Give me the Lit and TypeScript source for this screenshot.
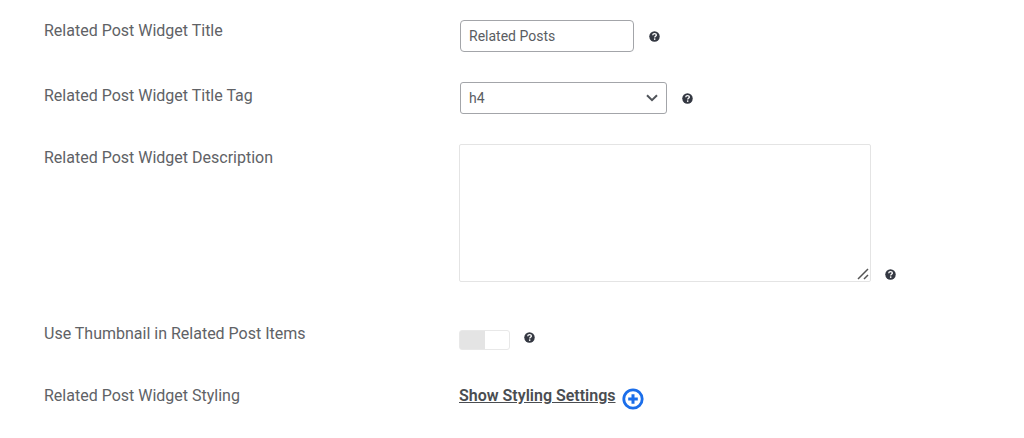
import { LitElement, html, css } from "lit";
import { customElement, property, state } from "lit/decorators.js";

@customElement("help-tip")
class HelpTip extends LitElement {
  @property() label = "Help";

  static styles = css`
    :host {
      display: block;
      flex: none;
      margin: 2px 0;
    }
    .tip {
      display: block;
      width: 11px;
      height: 11px;
      padding: 0;
      border: 0;
      background: none;
      cursor: help;
    }
    svg {
      display: block;
    }
  `;

  render() {
    return html`<button class="tip" type="button" aria-label=${this.label}>
      <svg viewBox="0 0 22 22" width="11" height="11" aria-hidden="true">
        <circle cx="11" cy="11" r="10.5" fill="#343842" />
        <path d="M7.4 8.4C7.6 6.4 9 5.3 11 5.3c2.200 0 3.700 1.100 3.700 2.900 0 2.400-3.200 2.500-3.200 4.700" fill="none" stroke="#fff" stroke-width="2.700" />
        <circle cx="11.400" cy="16.200" r="1.700" fill="#fff" />
      </svg>
    </button>`;
  }
}

@customElement("app-root")
class AppRoot extends LitElement {
  @state() private thumbnails = false;

  static styles = css`
    :host {
      display: block;
      background: #fff;
      color: #606266;
      font-family: Roboto, sans-serif;
      font-size: 16px;
      line-height: 22px;
    }
    * {
      box-sizing: border-box;
    }
    .settings {
      padding: 20px 44px 0;
    }
    .row {
      display: grid;
      grid-template-columns: minmax(0, 415px) minmax(0, 1fr);
      align-items: start;
      min-height: 62px;
    }
    .label {
      padding-top: 3px;
    }
    .first .label {
      padding-top: 0;
    }
    .field {
      display: flex;
      align-items: center;
      gap: 14px;
    }
    .area {
      align-items: flex-end;
      padding-bottom: 38px;
    }
    .toggle {
      align-items: flex-start;
      padding-top: 10px;
    }
    .link {
      padding-top: 3px;
    }
    .text,
    .select {
      height: 32px;
      margin: 0 1px;
      padding: 0 8px;
      border: 1px solid #a3a5a9;
      border-radius: 4px;
      background: #fff;
      color: #5a5d62;
      font: 14px/20px Roboto, sans-serif;
    }
    .text {
      width: 174px;
    }
    .pick {
      display: grid;
      align-items: center;
    }
    .select {
      grid-area: 1 / 1;
      width: 207px;
      border-radius: 3px;
      appearance: none;
    }
    .chevron {
      grid-area: 1 / 1;
      justify-self: end;
      margin-right: 10px;
      pointer-events: none;
    }
    .textarea {
      display: block;
      width: 412px;
      max-width: 100%;
      height: 138px;
      margin: 0;
      padding: 8px;
      border: 1px solid #e4e4e4;
      border-radius: 2px;
      background: #fff;
      color: inherit;
      font: inherit;
      resize: both;
    }
    .textarea::-webkit-resizer {
      background: no-repeat center / 13px 13px
        url("data:image/svg+xml,%3Csvg xmlns='http://www.w3.org/2000/svg' viewBox='0 0 13 13'%3E%3Cpath d='M2 12L12 2M8 12l4-4' stroke='%23555' stroke-width='1.5'/%3E%3C/svg%3E");
    }
    .switch {
      appearance: none;
      width: 51px;
      height: 20px;
      margin: 0;
      border: 1px solid #e8e8e8;
      border-radius: 3px;
      background: linear-gradient(90deg, #e4e4e4 52%, #fff 52%);
    }
    .switch:checked {
      background: linear-gradient(90deg, #fff 48%, #1d6fe0 48%);
    }
    .show {
      display: flex;
      align-items: flex-start;
      gap: 6px;
      color: #4a4d51;
      font-weight: 600;
      text-decoration: none;
    }
    .words {
      text-decoration: underline;
    }
    .plus {
      display: block;
      margin-top: 3px;
    }
  `;

  render() {
    return html`<form class="settings">
      <div class="row first">
        <label class="label" for="title">Related Post Widget Title</label>
        <div class="field">
          <input class="text" id="title" type="text" value="Related Posts" />
          <help-tip></help-tip>
        </div>
      </div>
      <div class="row">
        <label class="label" for="tag">Related Post Widget Title Tag</label>
        <div class="field">
          <div class="pick">
            <select class="select" id="tag">
              <option>h4</option>
            </select>
            <svg class="chevron" viewBox="0 0 12 8" width="12" height="8" aria-hidden="true">
              <path d="M1 1.200l5 5 5-5" fill="none" stroke="#50545a" stroke-width="2" />
            </svg>
          </div>
          <help-tip></help-tip>
        </div>
      </div>
      <div class="row">
        <label class="label" for="description">Related Post Widget Description</label>
        <div class="field area">
          <textarea class="textarea" id="description"></textarea>
          <help-tip></help-tip>
        </div>
      </div>
      <div class="row">
        <label class="label" for="thumbnail">Use Thumbnail in Related Post Items</label>
        <div class="field toggle">
          <input
            class="switch"
            id="thumbnail"
            type="checkbox"
            .checked=${this.thumbnails}
            @change=${() => (this.thumbnails = !this.thumbnails)}
          />
          <help-tip></help-tip>
        </div>
      </div>
      <div class="row">
        <span class="label">Related Post Widget Styling</span>
        <div class="field link">
          <a class="show" href="#styling"
            ><span class="words">Show Styling Settings</span>
            <svg class="plus" viewBox="0 0 22 22" width="22" height="22" aria-hidden="true">
              <circle cx="11" cy="11" r="9.200" fill="none" stroke="#1b6eea" stroke-width="2.800" />
              <path d="M11 6.200v9.600M6.200 11h9.600" stroke="#1b6eea" stroke-width="3" />
            </svg>
          </a>
        </div>
      </div>
    </form>`;
  }
}
